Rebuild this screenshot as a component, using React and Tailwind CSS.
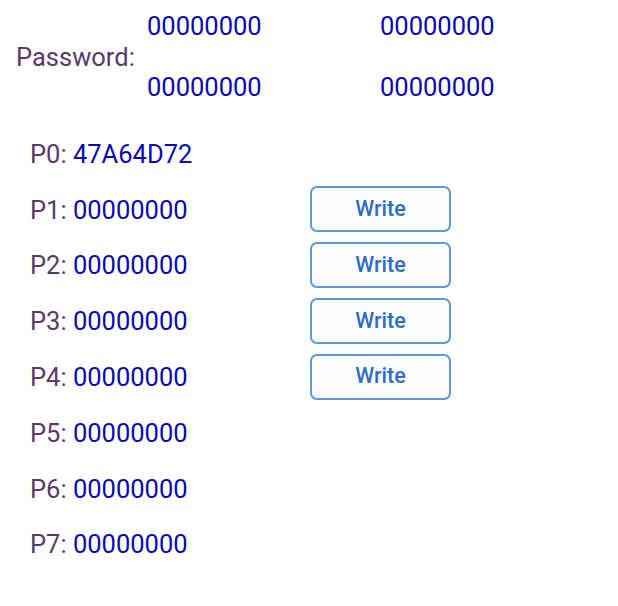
export default function App() {
  const regs = ["47A64D72", "00000000", "00000000", "00000000", "00000000", "00000000", "00000000", "00000000"];

  return (
    <div className="w-[618px] h-[606px] bg-white font-['Roboto',sans-serif] text-[25.5px]">
      {/* Password header */}
      <div className="grid grid-cols-[147px_233px_auto] gap-y-[31px] pt-[11px] leading-[30px]">
        <div className="row-span-2 self-center pl-4 text-[#5b3a69] text-[25.5px]">Password:</div>
        <div className="text-[#0a0aae]">00000000</div>
        <div className="text-[#0a0aae]">00000000</div>
        <div className="text-[#0a0aae]">00000000</div>
        <div className="text-[#0a0aae]">00000000</div>
      </div>

      {/* Pages */}
      <div className="mt-[24px] flex flex-col">
        {regs.map((v, i) => (
          <div key={i} className="flex items-center h-[55.8px]">
            <div className="w-[310px] pl-[30px] leading-[30px]">
              <span className="text-[#5b3a69]">P{i}: </span>
              <span className="text-[#0a0aae]">{v}</span>
            </div>
            {i >= 1 && i <= 4 && (
              <button className="w-[141px] h-[46px] -mt-[1px] rounded-[7px] border-2 border-[#5f98d8] bg-[#fdfdfd] text-[#2e6ec6] text-[21.5px] font-medium">
                Write
              </button>
            )}
          </div>
        ))}
      </div>
    </div>
  );
}
